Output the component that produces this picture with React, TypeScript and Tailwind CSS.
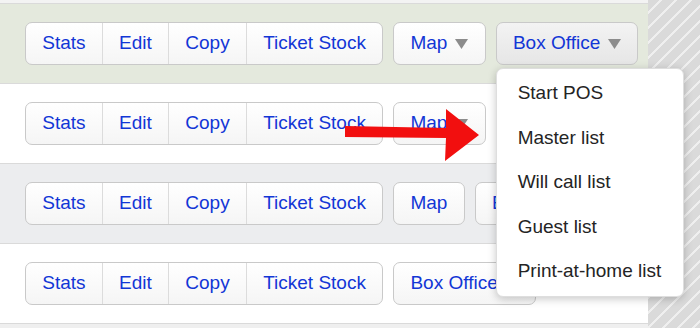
import { ReactNode } from 'react';

const rowBgs = ['bg-[#e4e9dd]', 'bg-white', 'bg-[#ecedef]', 'bg-white'];

const menuItems = ['Start POS', 'Master list', 'Will call list', 'Guest list', 'Print-at-home list'];

const Caret = () => (
  <svg width="13" height="10" viewBox="0 0 13 10" className="ml-2 shrink-0">
    <polygon points="0,0 13,0 6.5,10" fill="#8c8c8c" />
  </svg>
);

const Segment = ({ children, first }: { children: ReactNode; first?: boolean }) => (
  <div className={`flex items-center px-[16.25px] ${first ? '' : 'border-l border-[#dcdcdc]'}`}>{children}</div>
);

const ActionGroup = () => (
  <div className="flex h-[43px] rounded-[7px] border border-[#c9c9c9] bg-linear-to-b from-white to-[#f5f5f5]">
    <Segment first>Stats</Segment>
    <Segment>Edit</Segment>
    <Segment>Copy</Segment>
    <Segment>Ticket Stock</Segment>
  </div>
);

const DropButton = ({ label, caret, active }: { label: string; caret?: boolean; active?: boolean }) => (
  <div
    className={`flex h-[43px] items-center whitespace-nowrap rounded-[7px] border border-[#c9c9c9] px-[16.25px] bg-linear-to-b ${
      active ? 'from-[#f3f3f3] to-[#e6e6e6]' : 'from-white to-[#f5f5f5]'
    }`}
  >
    {label}
    {caret && <Caret />}
  </div>
);

const Menu = () => (
  <div className="absolute left-0 top-full z-20 mt-[3px] w-[188px] whitespace-nowrap rounded-[7px] border border-[#dedede] bg-white py-[2px] text-[#242424] shadow-[0_2px_8px_rgba(0,0,0,0.22)]">
    {menuItems.map(item => (
      <div key={item} className="flex h-[44.5px] items-center px-[21px]">
        {item}
      </div>
    ))}
  </div>
);

const Row = ({ bg, children }: { bg: string; children: ReactNode }) => (
  <div className={`flex h-[80px] items-center gap-[10px] border-t border-[#dadada] pl-[25px] ${bg}`}>{children}</div>
);

export default function App() {
  return (
    <div
      className="relative flex h-[328px] w-[700px] overflow-hidden text-[19px] text-[#1236d6]"
      style={{ fontFamily: '"Liberation Sans", Arial, sans-serif' }}
    >
      <div className="flex w-[648px] flex-col bg-[#efefef]">
        <div className="h-[3px] bg-[#f3f3f3]" />
        <Row bg={rowBgs[0]}>
          <ActionGroup />
          <DropButton label="Map" caret />
          <div className="relative">
            <DropButton label="Box Office" caret active />
            <Menu />
          </div>
        </Row>
        <Row bg={rowBgs[1]}>
          <ActionGroup />
          <DropButton label="Map" caret />
          <DropButton label="Box Office" caret />
        </Row>
        <Row bg={rowBgs[2]}>
          <ActionGroup />
          <DropButton label="Map" />
          <DropButton label="Box Office" caret />
        </Row>
        <Row bg={rowBgs[3]}>
          <ActionGroup />
          <DropButton label="Box Office" caret />
        </Row>
        <div className="flex-1 border-t border-[#dadada] bg-[#efefef]" />
      </div>
      <div className="flex-1 bg-[repeating-linear-gradient(135deg,#dadada_0,#dadada_8px,#efefef_8px,#efefef_10.6px)]" />

      <svg className="absolute left-[340px] top-[104px] z-30" width="145" height="62" viewBox="340 104 145 62">
        <polygon points="345,126 446,128 446,109 479,135 445,161 446,138 345,137" fill="#f20f0f" />
      </svg>
    </div>
  );
}
